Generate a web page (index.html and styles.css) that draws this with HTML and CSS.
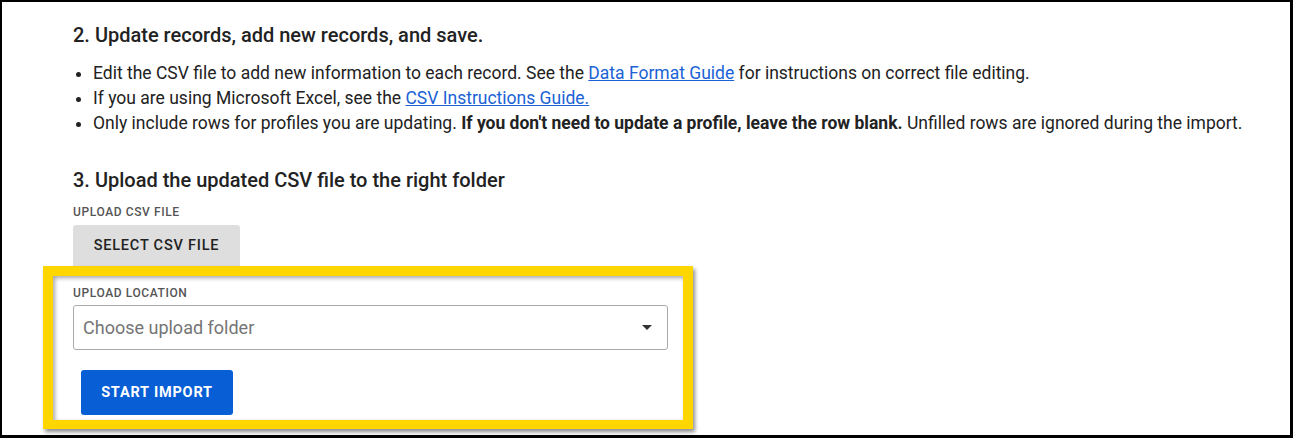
FILE: index.html
```html
<!DOCTYPE html>
<html lang="en">
<head>
<meta charset="utf-8">
<title>Update records</title>
<link rel="stylesheet" href="styles.css">
</head>
<body>
<div class="frame">
  <section class="step">
    <h2 class="step-title">2. Update records, add new records, and save.</h2>
    <ul class="bullets">
      <li>Edit the CSV file to add new information to each record. See the <a href="#">Data Format Guide</a> for instructions on correct file editing.</li>
      <li>If you are using Microsoft Excel, see the <a href="#">CSV Instructions Guide.</a></li>
      <li>Only include rows for profiles you are updating. <strong>If you don't need to update a profile, leave the row blank.</strong> Unfilled rows are ignored during the import.</li>
    </ul>
  </section>
  <section class="step step-upload">
    <h2 class="step-title">3. Upload the updated CSV file to the right folder</h2>
    <div class="field-label">UPLOAD CSV FILE</div>
    <button class="btn btn-grey" type="button">SELECT CSV FILE</button>
    <div class="highlight">
      <div class="field-label">UPLOAD LOCATION</div>
      <div class="select">
        <span class="placeholder">Choose upload folder</span>
        <svg class="caret" width="10" height="5" viewBox="0 0 10 5"><path d="M0 0 L10 0 L5 5 Z" fill="#333"/></svg>
      </div>
      <button class="btn btn-blue" type="button">START IMPORT</button>
    </div>
  </section>
</div>
</body>
</html>
```

FILE: styles.css
```css
html, body {
  margin: 0;
  padding: 0;
  background: #fff;
}

body {
  font-family: Roboto, "Liberation Sans", Arial, sans-serif;
  color: #222;
}

.frame {
  box-sizing: border-box;
  height: 438px;
  border: 2px solid #000;
  border-right-width: 3px;
  border-bottom-width: 3px;
  padding: 0 0 0 71px;
  overflow: hidden;
}

.step-title {
  margin: 0;
  font-size: 20px;
  font-weight: 500;
  line-height: 24px;
  color: #222;
}

.step:first-child .step-title {
  margin-top: 21px;
}

.bullets {
  margin: 14px 0 0 0;
  padding-left: 20px;
  font-size: 17.5px;
  line-height: 25px;
  color: #222;
}

.bullets a {
  color: #1a62d6;
  text-decoration: underline;
}

.bullets strong {
  font-weight: 700;
}

.step-upload {
  margin-top: 32px;
}

.field-label {
  font-size: 12px;
  font-weight: 500;
  letter-spacing: 0.6px;
  color: #555;
  line-height: 14px;
}

.step-upload > .field-label {
  margin-top: 13px;
}

.btn {
  display: block;
  border: 0;
  border-radius: 3px;
  font-family: inherit;
  font-size: 14.5px;
  font-weight: 500;
  letter-spacing: 0.8px;
  cursor: pointer;
}

.btn-grey {
  margin-top: 6px;
  width: 167px;
  height: 41px;
  background: #dedede;
  color: #222;
  border-radius: 3px 3px 0 0;
}

.highlight {
  margin-left: -30px;
  width: 650px;
  box-sizing: border-box;
  border: 10px solid #ffd600;
  border-bottom-width: 9px;
  padding: 10px 15px 5px 20px;
  box-shadow: 2px 3px 4px rgba(0, 0, 0, 0.45), inset 2px 2px 4px rgba(0, 0, 0, 0.35);
  background: #fff;
}

.select {
  margin-top: 5px;
  height: 45px;
  box-sizing: border-box;
  border: 1px solid #aaa;
  border-radius: 3px;
  display: flex;
  align-items: center;
  justify-content: space-between;
  padding: 0 15px 0 9px;
}

.placeholder {
  font-size: 18px;
  color: #757575;
}

.btn-blue {
  margin: 20px 0 0 8px;
  width: 152px;
  height: 45px;
  background: #075ed5;
  color: #fff;
  font-weight: 700;
}
```
